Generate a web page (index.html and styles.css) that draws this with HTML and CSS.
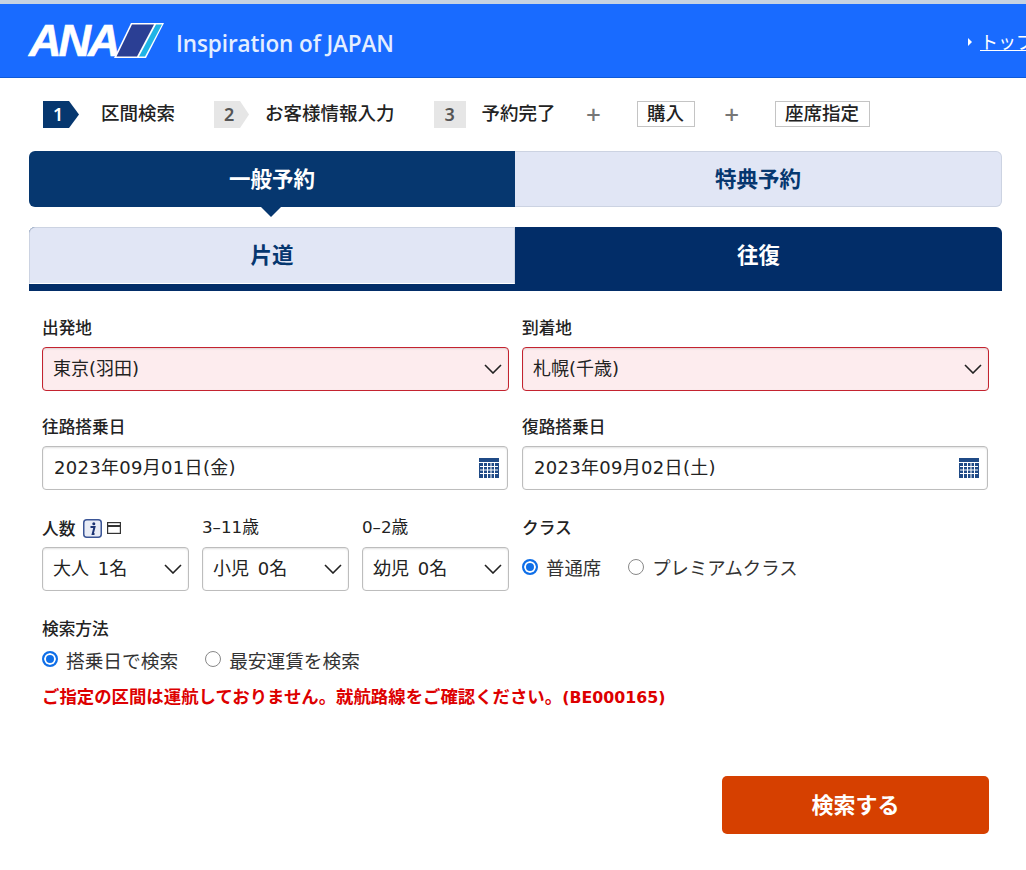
FILE: index.html
```html
<!DOCTYPE html>
<html lang="ja">
<head>
  <meta charset="UTF-8" />
  <meta name="viewport" content="width=device-width, initial-scale=1.0"/>
  <title>ANA - 区間検索</title>
  <link rel="stylesheet" href="styles.css">
</head>
<body>
<!-- HEADER -->
<header class="site-header">
  <div class="logo">
    <span class="logo-ana">ANA</span>
    <svg class="logo-mark" width="52" height="37" viewBox="0 0 52 37">
      <polygon points="18,1 51,1 33,36 1,36" fill="#fff"/>
      <polygon points="19,2.5 41,2.5 24,34.5 3.5,34.5" fill="#2b3f94"/>
      <polygon points="43,2.5 49,2.5 32,34.5 26,34.5" fill="#1fb4e6"/>
    </svg>
  </div>
  <span class="logo-tagline">Inspiration of JAPAN</span>
  <a class="top-link" href="#">トップページへ</a>
</header>

<!-- STEPS -->
<ol class="steps">
  <li class="step current"><span class="step-num">1</span>区間検索</li>
  <li class="step"><span class="step-num">2</span>お客様情報入力</li>
  <li class="step"><span class="step-num plain">3</span>予約完了</li>
  <li class="step-plus">+</li>
  <li class="step-box">購入</li>
  <li class="step-plus">+</li>
  <li class="step-box">座席指定</li>
</ol>

<main class="container">
  <!-- BOOKING TYPE -->
  <div class="type-tabs">
    <div class="type-tab active">一般予約</div>
    <div class="type-tab">特典予約</div>
  </div>

  <div class="trip-tabs">
    <div class="trip-tab">片道</div>
    <div class="trip-tab active">往復</div>
  </div>

  <!-- SEARCH FORM -->
  <form class="search-form">
    <div class="row">
      <div class="field">
        <label class="field-label">出発地</label>
        <div class="select-wrap error">
          <select><option>東京(羽田)</option></select>
          <svg class="chevron" width="18" height="10" viewBox="0 0 18 10"><path d="M1 1l8 8 8-8" fill="none" stroke="#222" stroke-width="1.6"/></svg>
        </div>
      </div>
      <div class="field">
        <label class="field-label">到着地</label>
        <div class="select-wrap error">
          <select><option>札幌(千歳)</option></select>
          <svg class="chevron" width="18" height="10" viewBox="0 0 18 10"><path d="M1 1l8 8 8-8" fill="none" stroke="#222" stroke-width="1.6"/></svg>
        </div>
      </div>
    </div>

    <div class="row row-dates">
      <div class="field">
        <label class="field-label">往路搭乗日</label>
        <div class="date-input">
          2023年09月01日(金)
          <svg class="cal" width="20" height="20" viewBox="0 0 20 20"><rect width="20" height="20" fill="#1f4a86"/><path d="M0 4.5h20M1 8.5h18M1 12h18M1 15.5h18M4.5 5v15M8.5 5v15M12 5v15M15.5 5v15" stroke="#fff" stroke-width="1"/></svg>
        </div>
      </div>
      <div class="field">
        <label class="field-label">復路搭乗日</label>
        <div class="date-input">
          2023年09月02日(土)
          <svg class="cal" width="20" height="20" viewBox="0 0 20 20"><rect width="20" height="20" fill="#1f4a86"/><path d="M0 4.5h20M1 8.5h18M1 12h18M1 15.5h18M4.5 5v15M8.5 5v15M12 5v15M15.5 5v15" stroke="#fff" stroke-width="1"/></svg>
        </div>
      </div>
    </div>

    <div class="row row-dates">
      <div class="people">
        <div class="field">
          <label class="field-label people-label">人数
            <svg class="info" width="19" height="19" viewBox="0 0 19 19"><rect x=".75" y=".75" width="17.5" height="17.5" rx="3" fill="#e8ecf6" stroke="#3b5596" stroke-width="1.5"/><circle cx="10.8" cy="4.8" r="1.5" fill="#1c3474"/><path d="M7.5 8h4l-1.8 7h1.8" fill="none" stroke="#1c3474" stroke-width="2"/></svg>
            <svg class="win" width="14" height="12" viewBox="0 0 14 12"><rect x=".6" y=".6" width="12.8" height="10.8" fill="#fff" stroke="#333" stroke-width="1.2"/><path d="M1 4h12" stroke="#333" stroke-width="2"/></svg>
          </label>
          <div class="select-wrap">
            <select><option>大人 1名</option></select>
            <svg class="chevron" width="18" height="10" viewBox="0 0 18 10"><path d="M1 1l8 8 8-8" fill="none" stroke="#222" stroke-width="1.6"/></svg>
          </div>
        </div>
        <div class="field">
          <label class="field-label light">3–11歳</label>
          <div class="select-wrap">
            <select><option>小児 0名</option></select>
            <svg class="chevron" width="18" height="10" viewBox="0 0 18 10"><path d="M1 1l8 8 8-8" fill="none" stroke="#222" stroke-width="1.6"/></svg>
          </div>
        </div>
        <div class="field">
          <label class="field-label light">0–2歳</label>
          <div class="select-wrap">
            <select><option>幼児 0名</option></select>
            <svg class="chevron" width="18" height="10" viewBox="0 0 18 10"><path d="M1 1l8 8 8-8" fill="none" stroke="#222" stroke-width="1.6"/></svg>
          </div>
        </div>
      </div>
      <div class="field">
        <label class="field-label">クラス</label>
        <div class="radios class-radios">
          <label class="radio"><input type="radio" name="cabin" checked> 普通席</label>
          <label class="radio"><input type="radio" name="cabin"> プレミアムクラス</label>
        </div>
      </div>
    </div>

    <div class="method">
      <label class="field-label">検索方法</label>
      <div class="radios method-radios">
        <label class="radio"><input type="radio" name="method" checked> 搭乗日で検索</label>
        <label class="radio"><input type="radio" name="method"> 最安運賃を検索</label>
      </div>
      <p class="error-msg">ご指定の区間は運航しておりません。就航路線をご確認ください。<span class="error-code">(BE000165)</span></p>
    </div>

    <div class="actions">
      <button type="button" class="submit-btn">検索する</button>
    </div>
  </form>
</main>
</body>
</html>
```

FILE: styles.css
```css
* { box-sizing: border-box; }
body {
  margin: 0;
  height: 870px;
  overflow: hidden;
  background: #fff;
  color: #222;
  font-family: "DejaVu Sans", "Noto Sans CJK JP", sans-serif;
}

/* header */
.site-header {
  display: flex;
  align-items: center;
  height: 78px;
  padding-left: 29px;
  background: #196bff;
  border-top: 4px solid #c6d3e2;
  border-bottom: 1px solid #0f5ad8;
  overflow: hidden;
  white-space: nowrap;
}
.logo {
  display: flex;
  align-items: center;
  width: 147px;
  flex-shrink: 0;
}
.logo-ana {
  width: 84px;
  color: #fff;
  font-family: "Liberation Sans", sans-serif;
  font-size: 45px;
  font-weight: bold;
  font-style: italic;
  letter-spacing: -3px;
  line-height: 1;
  -webkit-text-stroke: .6px #fff;
}
.logo-tagline {
  flex-shrink: 0;
  width: 218px;
  padding-top: 5px;
  color: #e4eeff;
  font-family: "Open Sans", sans-serif;
  font-size: 22.5px;
  font-weight: 600;
  letter-spacing: -.1px;
}
.top-link {
  position: relative;
  flex-shrink: 0;
  margin-left: 586px;
  color: #fff;
  font-family: "Noto Sans CJK JP", sans-serif;
  font-size: 18px;
}
.top-link::before {
  content: "";
  position: absolute;
  left: -12px;
  top: 10px;
  border-left: 4px solid #fff;
  border-top: 4px solid transparent;
  border-bottom: 4px solid transparent;
}

/* steps */
.steps {
  display: flex;
  align-items: flex-start;
  height: 27px;
  margin: 23px 0;
  padding: 0 0 0 43px;
  list-style: none;
  font-family: "Noto Sans CJK JP", sans-serif;
  font-size: 18.5px;
  font-weight: 500;
  line-height: 23px;
}
.step {
  display: flex;
  align-items: flex-start;
  margin-right: 39px;
}
.step-num {
  display: flex;
  align-items: center;
  width: 35px;
  height: 27px;
  margin-right: 16px;
  padding-left: 10px;
  background: #e6e6e6;
  color: #555;
  font-family: "Noto Sans", sans-serif;
  font-size: 18px;
  font-weight: 600;
  clip-path: polygon(0 0, 26px 0, 100% 50%, 26px 100%, 0 100%);
}
.current .step-num {
  width: 36px;
  margin-right: 22px;
  background: #06376f;
  color: #fff;
}
.step-num.plain {
  width: 32px;
  padding-left: 11px;
  clip-path: none;
}
.step:nth-child(3) { margin-right: 31px; }
.step-plus {
  display: flex;
  justify-content: center;
  width: 14px;
  margin-right: 36px;
  color: #777;
  font-family: "Noto Sans", sans-serif;
  font-size: 26px;
  font-weight: 500;
  line-height: 27px;
}
.step-box {
  height: 26px;
  padding: 0 9.5px;
  margin-right: 30px;
  border: 1px solid #c4c4c4;
  line-height: 21px;
}

.container {
  width: 973px;
  margin-left: 29px;
}

/* tabs */
.type-tabs, .trip-tabs {
  display: grid;
  grid-template-columns: 486px 487px;
  text-align: center;
  font-family: "Noto Sans CJK JP", sans-serif;
  font-size: 21.5px;
  font-weight: bold;
}
.type-tab {
  position: relative;
  height: 56px;
  line-height: 51px;
  background: #e1e6f5;
  color: #06376f;
  border: 1px solid #ccd3e2;
  border-left: 0;
  border-radius: 0 6px 6px 0;
}
.type-tab.active {
  background: #06376f;
  color: #fff;
  border: 0;
  border-radius: 6px 0 0 6px;
  line-height: 53px;
}
.type-tab.active::after {
  content: "";
  position: absolute;
  left: 232px;
  bottom: -10px;
  border-top: 10px solid #06376f;
  border-left: 10px solid transparent;
  border-right: 10px solid transparent;
}
.trip-tabs {
  margin-top: 20px;
  padding-bottom: 7px;
  background: #022d68;
  border-radius: 6px 6px 0 0;
}
.trip-tab {
  height: 57px;
  line-height: 52px;
  background: #e1e6f5;
  color: #06376f;
  border: 1px solid #ccd3e2;
  border-bottom-color: #fff;
  border-radius: 6px 0 0 0;
}
.trip-tab.active {
  background: none;
  color: #fff;
  border: 0;
  line-height: 54px;
}

/* form */
.search-form {
  padding: 27px 13px 0;
}
.row {
  display: grid;
  grid-template-columns: 467px 467px;
  gap: 13px;
  margin-bottom: 26px;
}
.row-dates { margin-bottom: 28px; }
.field-label {
  display: block;
  height: 20px;
  margin-bottom: 9px;
  font-family: "Noto Sans CJK JP", sans-serif;
  font-size: 16.7px;
  font-weight: 500;
  line-height: 18px;
}
.field-label.light {
  font-family: "DejaVu Sans", "Noto Sans CJK JP", sans-serif;
  font-weight: 400;
}
.people-label {
  display: flex;
  align-items: center;
}
.info { margin-left: 8px; }
.win { margin-left: 5px; }
.select-wrap { position: relative; }
.select-wrap select {
  width: 100%;
  height: 44px;
  padding: 0 10px 2px;
  appearance: none;
  background: #fff;
  color: #222;
  border: 1px solid #bdbdbd;
  border-radius: 4px;
  box-shadow: inset 0 1px 2px rgba(0,0,0,.12);
  font-family: inherit;
  font-size: 18px;
  word-spacing: 3px;
}
.select-wrap.error select {
  background: #fdecee;
  border-color: #c4232f;
}
.chevron {
  position: absolute;
  right: 7px;
  top: 17px;
  pointer-events: none;
}
.date-input {
  position: relative;
  width: 466px;
  height: 44px;
  padding-left: 11px;
  border: 1px solid #bdbdbd;
  border-radius: 4px;
  box-shadow: inset 0 1px 2px rgba(0,0,0,.12);
  font-size: 18px;
  letter-spacing: .3px;
  line-height: 41px;
}
.cal {
  position: absolute;
  right: 8px;
  top: 11px;
}
.people {
  display: grid;
  grid-template-columns: repeat(3, 147px);
  gap: 13px;
}
.radios {
  display: flex;
  color: #333;
  font-family: "Noto Sans CJK JP", sans-serif;
  font-size: 18.4px;
}
.radio {
  display: flex;
  align-items: center;
  gap: 8px;
}
.radio input {
  width: 16px;
  height: 16px;
  margin: 0;
  appearance: none;
  background: #fff;
  border: 1px solid #888;
  border-radius: 50%;
}
.radio input:checked {
  border: 2px solid #0f6fe8;
  background: #0f6fe8;
  box-shadow: inset 0 0 0 2px #fff;
}
.class-radios {
  gap: 27px;
  height: 40px;
}
.method .field-label { margin-bottom: 8px; }
.method-radios {
  gap: 27px;
  height: 24px;
  font-size: 18.7px;
}
.error-msg {
  margin: 14px 0 0;
  color: #dd0000;
  font-family: "Noto Sans CJK JP", sans-serif;
  font-size: 17.4px;
  font-weight: bold;
  line-height: 22px;
}
.error-code {
  font-family: "DejaVu Sans", sans-serif;
  font-size: 15.8px;
}
.actions {
  display: flex;
  justify-content: flex-end;
  margin-top: 67px;
}
.submit-btn {
  width: 267px;
  height: 58px;
  padding-bottom: 6px;
  background: #d64000;
  color: #fff;
  border: none;
  border-radius: 5px;
  font-family: "Noto Sans CJK JP", sans-serif;
  font-size: 22px;
  font-weight: bold;
}
```
